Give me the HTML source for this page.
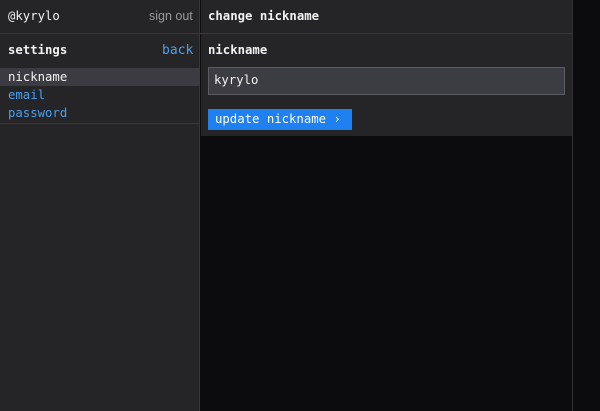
<!DOCTYPE html>
<html><head><style>
*{margin:0;padding:0;box-sizing:border-box}
body{width:600px;height:411px;background:#0c0c0e;position:relative;overflow:hidden;font-family:"DejaVu Sans Mono","Liberation Mono",monospace;font-size:12.3px;color:#f2f2f2}
.a{position:absolute}
.left{left:0;top:0;width:200px;height:411px;background:#252527;border-right:1px solid #38383c}
.mid{left:201px;top:0;width:371px;height:136px;background:#252527}
.vr{left:572px;top:0;width:1px;height:411px;background:#333337}
.hl{height:1px;background:#38383c}
.b{font-weight:bold}
.blue{color:#4a9ff0}
</style></head><body>
<div class="a left"></div>
<div class="a mid"></div>
<div class="a vr"></div>
<div class="a hl" style="left:0;top:33px;width:572px"></div>
<div class="a hl" style="left:0;top:123px;width:200px"></div>
<div class="a" style="left:8px;top:9px">@kyrylo</div>
<div class="a" style="left:149px;top:9px;font-family:'Liberation Sans',sans-serif;font-size:12.5px;color:#9a9a9e">sign out</div>
<div class="a b" style="left:8px;top:43px">settings</div>
<div class="a blue" style="left:162px;top:43px;font-size:13px">back</div>
<div class="a" style="left:0;top:68px;width:200px;height:18px;background:#3b3b41"></div>
<div class="a" style="left:8px;top:70px">nickname</div>
<div class="a blue" style="left:8px;top:88px">email</div>
<div class="a blue" style="left:8px;top:106px">password</div>
<div class="a b" style="left:208px;top:9px">change nickname</div>
<div class="a b" style="left:208px;top:43px">nickname</div>
<div class="a" style="left:208px;top:67px;width:357px;height:28px;background:#3c3c43;border:1px solid #5c5c62"></div>
<div class="a" style="left:214px;top:73px">kyrylo</div>
<div class="a" style="left:208px;top:109px;width:144px;height:21px;background:#1f80f2"></div>
<div class="a" style="left:215px;top:112px;color:#fff">update nickname ›</div>
</body></html>
